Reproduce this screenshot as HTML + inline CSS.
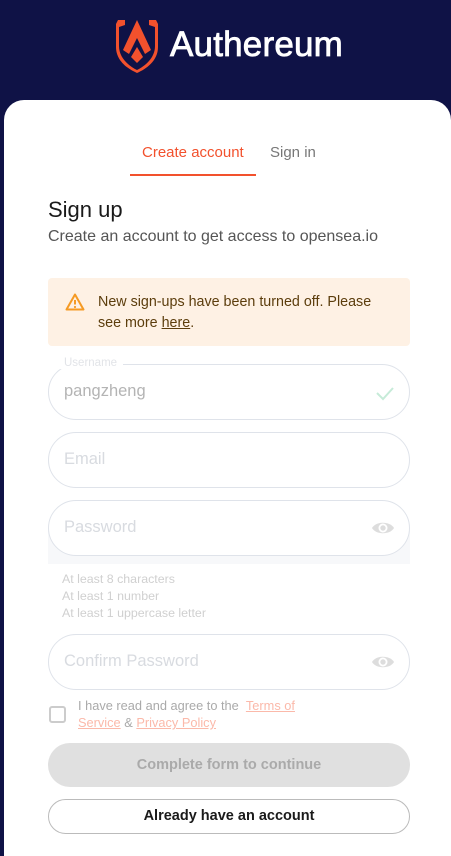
<!DOCTYPE html>
<html><head><meta charset="utf-8">
<style>
*{margin:0;padding:0;box-sizing:border-box}
html,body{width:451px;height:856px;overflow:hidden}
body{background:#0f1246;font-family:"Liberation Sans",sans-serif;position:relative}
.card{position:absolute;left:4px;top:100px;width:447px;height:756px;background:#fff;border-radius:20px 20px 0 0}
.a{position:absolute}
.field{position:absolute;left:48px;width:362px;height:56px;border:1px solid #dfe3ea;border-radius:28px}
.ph{position:absolute;left:15px;top:17px;font-size:16.5px;color:#d8dbe0}
</style></head><body>
<svg class="a" style="left:115px;top:16px" width="44" height="58" viewBox="0 0 44 58">
<path d="M3 4 L10 4 L10 9 L4 11 L4 30 C4 42 14 50 22 54 C30 50 40 42 40 30 L40 11 L34 9 L34 4 L41 4 L43 8 L43 31 C43 45 31 53 22 57 C13 53 1 45 1 31 L1 8 Z" fill="#f2512d"/>
<path d="M22 4 L36 34 L30 38 L22 22 L14 38 L8 34 Z" fill="#f2512d"/>
<path d="M22 31 L28 41 L22 47 L16 41 Z" fill="#f2512d"/>
</svg>
<div class="a" style="left:170px;top:25px;font-size:35px;color:#fff;letter-spacing:0.2px;-webkit-text-stroke:0.8px #fff">Authereum</div>
<div class="card"></div>
<div class="a" style="left:142px;top:144px;font-size:15px;color:#f2512d">Create account</div>
<div class="a" style="left:270px;top:144px;font-size:15px;color:#777">Sign in</div>
<div class="a" style="left:130px;top:174px;width:126px;height:2px;background:#f2512d"></div>
<div class="a" style="left:48px;top:197px;font-size:22px;color:#1a1a1a">Sign up</div>
<div class="a" style="left:48px;top:228px;font-size:16px;color:#555">Create an account to get access to opensea.io</div>
<div class="a" style="left:48px;top:278px;width:362px;height:68px;background:#fef1e4;border-radius:4px"></div>
<svg class="a" style="left:65px;top:293px" width="20" height="18" viewBox="0 0 20 18"><path d="M10 1.5 L18.5 16.5 L1.5 16.5 Z" fill="none" stroke="#f59a23" stroke-width="2" stroke-linejoin="round"/><path d="M10 7 V11.5" stroke="#f59a23" stroke-width="2"/><circle cx="10" cy="14" r="1.1" fill="#f59a23"/></svg>
<div class="a" style="left:98px;top:292px;font-size:14.3px;color:#5c3d0c;line-height:21px">New sign-ups have been turned off. Please<br>see more <u>here</u>.</div>
<div class="field" style="top:364px"><div class="ph" style="color:#b4b4b4">pangzheng</div>
<svg class="a" style="right:14px;top:20px" width="20" height="16"><path d="M2 8 L8 14 L18 3" fill="none" stroke="#c6ebd8" stroke-width="2"/></svg></div>
<div class="a" style="left:58px;top:357px;padding:0 6px;background:#fff;font-size:11.5px;color:#e2e4e8">Username</div>
<div class="field" style="top:432px"><div class="ph">Email</div></div>
<div class="a" style="left:48px;top:530px;width:362px;height:34px;background:#f7f8fa"></div>
<div class="field" style="top:500px;background:#fff"><div class="ph">Password</div>
<svg class="a" style="right:14px;top:18px" width="24" height="18" viewBox="0 0 24 18"><path d="M1 9 C5 2 19 2 23 9 C19 16 5 16 1 9Z" fill="#ddd"/><circle cx="12" cy="9" r="4.5" fill="#fff"/><circle cx="12" cy="9" r="2.7" fill="#ddd"/></svg></div>
<div class="a" style="left:62px;top:571px;font-size:12.4px;color:#d0d0d0;line-height:17px">At least 8 characters<br>At least 1 number<br>At least 1 uppercase letter</div>
<div class="field" style="top:634px"><div class="ph">Confirm Password</div>
<svg class="a" style="right:14px;top:18px" width="24" height="18" viewBox="0 0 24 18"><path d="M1 9 C5 2 19 2 23 9 C19 16 5 16 1 9Z" fill="#ddd"/><circle cx="12" cy="9" r="4.5" fill="#fff"/><circle cx="12" cy="9" r="2.7" fill="#ddd"/></svg></div>
<div class="a" style="left:49px;top:706px;width:17px;height:17px;border:2px solid #ccc;border-radius:3px"></div>
<div class="a" style="left:78px;top:697px;font-size:12.8px;color:#aaa;line-height:17px">I have read and agree to the &nbsp;<u style="color:#fbb9aa">Terms of</u><br><u style="color:#fbb9aa">Service</u> &amp; <u style="color:#fbb9aa">Privacy Policy</u></div>
<div class="a" style="left:48px;top:743px;width:362px;height:44px;background:#e0e0e0;border-radius:22px;text-align:center;line-height:44px;font-size:14.5px;font-weight:bold;color:#aaa">Complete form to continue</div>
<div class="a" style="left:48px;top:799px;width:362px;height:35px;border:1px solid #bbb;border-radius:18px;text-align:center;line-height:33px;font-size:14.5px;font-weight:bold;color:#1a1a1a">Already have an account</div>
</body></html>
